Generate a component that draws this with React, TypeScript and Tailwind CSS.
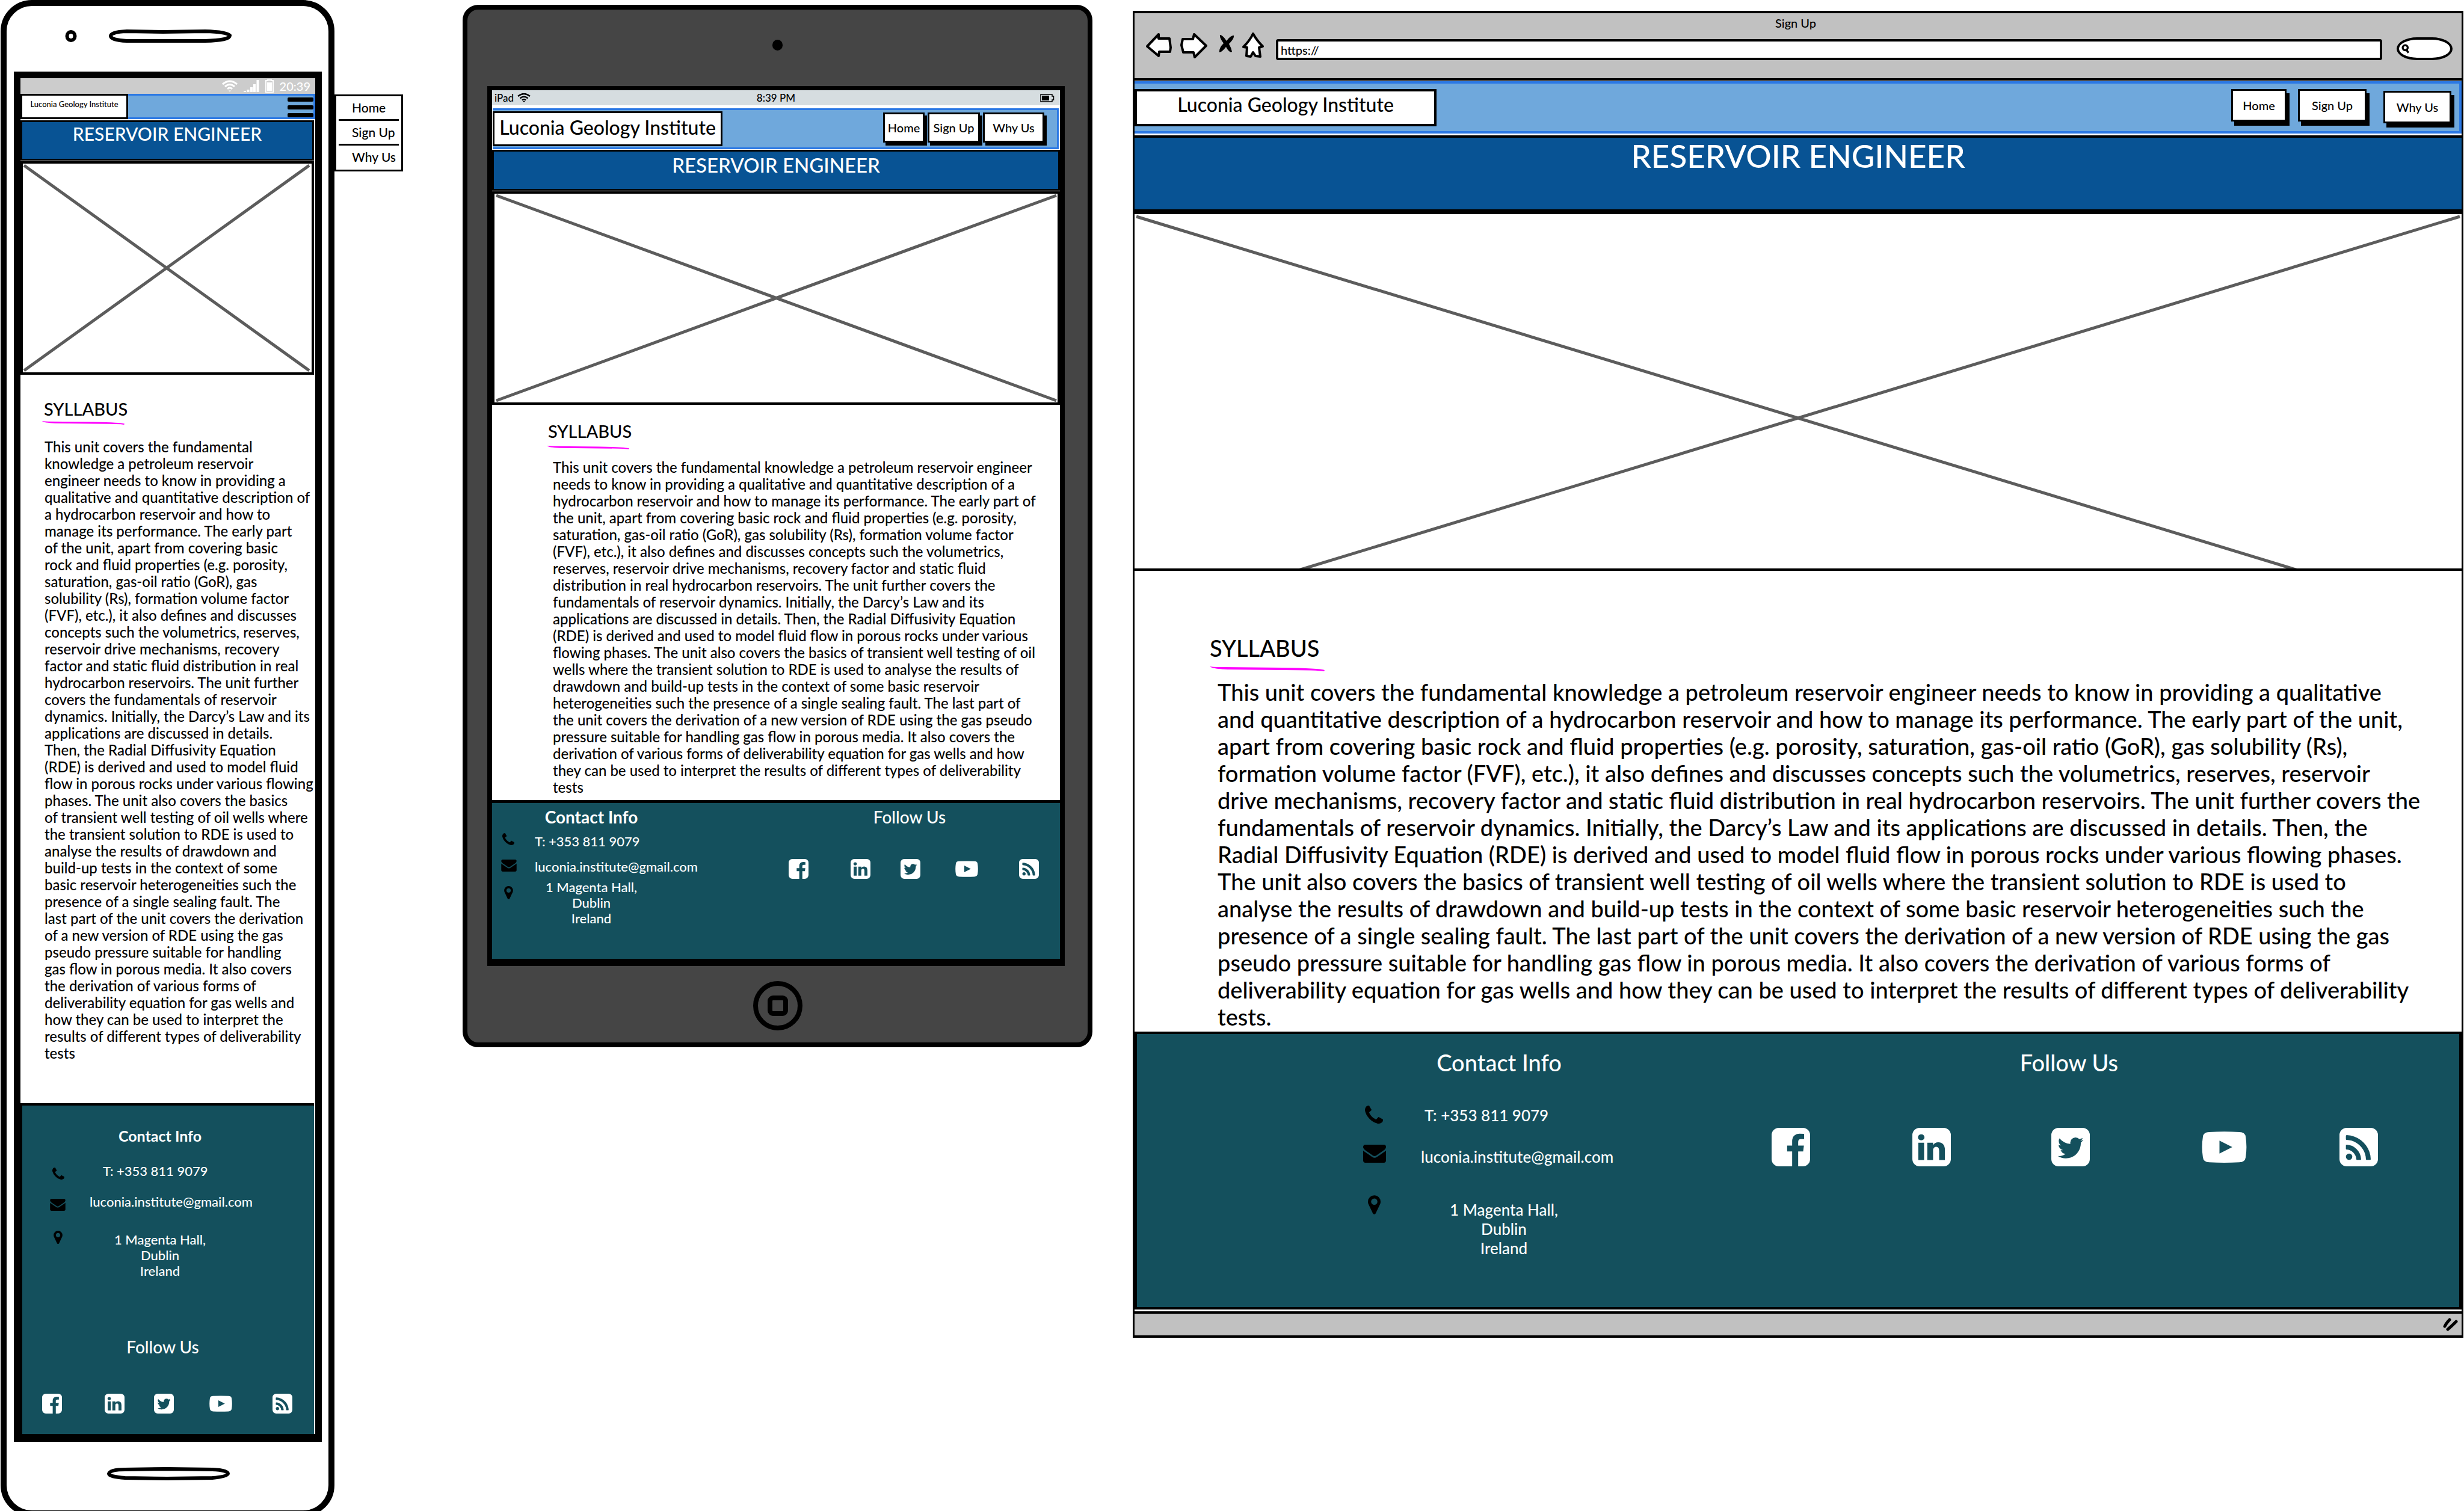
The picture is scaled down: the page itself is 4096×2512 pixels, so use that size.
import React from "react";

const LINES_PHONE = `This unit covers the fundamental
knowledge a petroleum reservoir
engineer needs to know in providing a
qualitative and quantitative description of
a hydrocarbon reservoir and how to
manage its performance. The early part
of the unit, apart from covering basic
rock and fluid properties (e.g. porosity,
saturation, gas-oil ratio (GoR), gas
solubility (Rs), formation volume factor
(FVF), etc.), it also defines and discusses
concepts such the volumetrics, reserves,
reservoir drive mechanisms, recovery
factor and static fluid distribution in real
hydrocarbon reservoirs. The unit further
covers the fundamentals of reservoir
dynamics. Initially, the Darcy’s Law and its
applications are discussed in details.
Then, the Radial Diffusivity Equation
(RDE) is derived and used to model fluid
flow in porous rocks under various flowing
phases. The unit also covers the basics
of transient well testing of oil wells where
the transient solution to RDE is used to
analyse the results of drawdown and
build-up tests in the context of some
basic reservoir heterogeneities such the
presence of a single sealing fault. The
last part of the unit covers the derivation
of a new version of RDE using the gas
pseudo pressure suitable for handling
gas flow in porous media. It also covers
the derivation of various forms of
deliverability equation for gas wells and
how they can be used to interpret the
results of different types of deliverability
tests`;

const LINES_TABLET = `This unit covers the fundamental knowledge a petroleum reservoir engineer
needs to know in providing a qualitative and quantitative description of a
hydrocarbon reservoir and how to manage its performance. The early part of
the unit, apart from covering basic rock and fluid properties (e.g. porosity,
saturation, gas-oil ratio (GoR), gas solubility (Rs), formation volume factor
(FVF), etc.), it also defines and discusses concepts such the volumetrics,
reserves, reservoir drive mechanisms, recovery factor and static fluid
distribution in real hydrocarbon reservoirs. The unit further covers the
fundamentals of reservoir dynamics. Initially, the Darcy’s Law and its
applications are discussed in details. Then, the Radial Diffusivity Equation
(RDE) is derived and used to model fluid flow in porous rocks under various
flowing phases. The unit also covers the basics of transient well testing of oil
wells where the transient solution to RDE is used to analyse the results of
drawdown and build-up tests in the context of some basic reservoir
heterogeneities such the presence of a single sealing fault. The last part of
the unit covers the derivation of a new version of RDE using the gas pseudo
pressure suitable for handling gas flow in porous media. It also covers the
derivation of various forms of deliverability equation for gas wells and how
they can be used to interpret the results of different types of deliverability
tests`;

const LINES_DESKTOP = `This unit covers the fundamental knowledge a petroleum reservoir engineer needs to know in providing a qualitative
and quantitative description of a hydrocarbon reservoir and how to manage its performance. The early part of the unit,
apart from covering basic rock and fluid properties (e.g. porosity, saturation, gas-oil ratio (GoR), gas solubility (Rs),
formation volume factor (FVF), etc.), it also defines and discusses concepts such the volumetrics, reserves, reservoir
drive mechanisms, recovery factor and static fluid distribution in real hydrocarbon reservoirs. The unit further covers the
fundamentals of reservoir dynamics. Initially, the Darcy’s Law and its applications are discussed in details. Then, the
Radial Diffusivity Equation (RDE) is derived and used to model fluid flow in porous rocks under various flowing phases.
The unit also covers the basics of transient well testing of oil wells where the transient solution to RDE is used to
analyse the results of drawdown and build-up tests in the context of some basic reservoir heterogeneities such the
presence of a single sealing fault. The last part of the unit covers the derivation of a new version of RDE using the gas
pseudo pressure suitable for handling gas flow in porous media. It also covers the derivation of various forms of
deliverability equation for gas wells and how they can be used to interpret the results of different types of deliverability
tests.`;

const SQUARE =
  "M1664 416v960q0 119-84.5 203.5t-203.5 84.5h-960q-119 0-203.5-84.5t-84.5-203.5v-960q0-119 84.5-203.5t203.5-84.5h960q119 0 203.5 84.5t84.5 203.5z";

const SOCIAL = [
  {
    name: "Facebook",
    box: "128 128 1536 1536",
    d: "M1376 128q119 0 203.5 84.5t84.5 203.5v960q0 119-84.5 203.5t-203.5 84.5h-188v-595h199l30-232h-229v-148q0-56 23.5-84t91.5-28l122-1v-207q-63-9-178-9-136 0-217.5 80t-81.5 226v171h-200v232h200v595h-532q-119 0-203.5-84.5t-84.5-203.5v-960q0-119 84.5-203.5t203.5-84.5h960z",
  },
  {
    name: "LinkedIn",
    box: "128 128 1536 1536",
    d:
      "M365 1414h231v-694h-231v694zm246-908q-1-52-36-86t-93-34-94.5 34-36.5 86q0 51 35.5 85.5t92.5 34.5h1q59 0 95-34.5t36-85.5zm585 908h231v-398q0-154-73-233t-193-79q-136 0-209 117h2v-101h-231q3 66 0 694h231v-388q0-38 7-56 15-35 45-59.5t74-24.5q116 0 116 157v371z" +
      SQUARE,
  },
  {
    name: "Twitter",
    box: "128 128 1536 1536",
    d:
      "M1408 610q-56 25-121 34 68-40 93-117-65 38-134 51-61-66-153-66-87 0-148.5 61.5t-61.5 148.5q0 29 5 48-129-7-242-65t-192-155q-29 50-29 106 0 114 91 175-47-1-100-26v2q0 75 50 133.5t123 72.5q-29 8-51 8-13 0-39-4 21 63 74.5 104t121.5 42q-116 90-261 90-26 0-50-3 148 94 322 94 112 0 210-35.5t168-95 120.5-137 75-162 24.5-168.5q0-18-1-27 63-45 105-109z" +
      SQUARE,
  },
  {
    name: "YouTube",
    box: "0 0 84 72",
    d: "M14 8Q42 6 70 8Q81 8 82 17Q85 36 82 55Q81 64 70 64.500Q42 66 14 64.500Q3 64 2 55Q-1 36 2 17Q3 8 14 8zM33 24L57 36L33 48z",
  },
  {
    name: "RSS",
    box: "128 128 1536 1536",
    d:
      "M640 1280q0-53-37.5-90.5t-90.5-37.5-90.5 37.5-37.5 90.5 37.5 90.5 90.5 37.5 90.5-37.5 37.5-90.5zm351 94q-13-232-177-396t-396-177q-14-1-24 9t-10 23v128q0 13 8.5 22t21.5 10q154 11 264 121t121 264q1 13 10 21.5t22 8.5h128q13 0 23-10t9-24zm384 1q-5-154-56-297.5t-139.5-260-205-205-260-139.5-297.5-56q-14-1-23 9-10 10-10 23v128q0 13 9 22t22 10q204 7 378 111.5t278.5 278.5 111.5 378q1 13 10 22t22 9h128q13 0 23-10 11-9 9-23z" +
      SQUARE,
  },
];

const PHONE_D =
  "M1408 1112q0 27-10 70.5t-21 68.5q-21 50-122 106-94 51-186 51-27 0-52.5-3.5t-57.5-12.5-47.5-14.5-55.5-20.5-49-18q-98-35-175-83-128-79-264.5-215.5t-215.5-264.5q-48-77-83-175-3-9-18-49t-20.5-55.5-14.5-47.5-12.5-57.5-3.5-52.5q0-92 51-186 56-101 106-122 25-11 68.5-21t70.5-10q14 0 21 3 18 6 53 76 11 19 30 54t35 63.5 31 53.5q3 4 17.5 25t21.5 35.5 7 28.5q0 20-28.5 50t-62 55-62 53-28.5 46q0 9 5 22.5t8.5 20.5 14 24 11.5 19q76 137 174 235t235 174q2 1 19 11.5t24 14 20.5 8.5 22.5 5q18 0 46-28.5t53-62 55-62 50-28.5q14 0 28.5 7t35.5 21.5 25 17.5q25 15 53.5 31t63.5 35 54 30q70 35 76 53 3 7 3 21z";
const MAIL_D =
  "M1792 710v794q0 66-47 113t-113 47h-1472q-66 0-113-47t-47-113v-794q44 49 101 87 362 246 497 345 57 42 92.5 65.5t94.5 48 110 24.5h2q51 0 110-24.5t94.5-48 92.5-65.5q170-123 498-345 57-39 100-87zm0-294q0 79-49 151t-122 123q-376 261-468 325-10 7-42.5 31t-54 38.5-52 32.5-57.5 27-50 9h-2q-23 0-50-9t-57.5-27-52-32.5-54-38.5-42.5-31q-91-64-262-182.5t-205-142.5q-62-42-117-115.5t-55-136.5q0-78 41.5-130t118.5-52h1472q65 0 112.5 47t47.5 113z";
const PIN_D =
  "M1152 640q0-106-75-181t-181-75-181 75-75 181 75 181 181 75 181-75 75-181zm256 0q0 109-33 179l-364 774q-16 33-47.5 52t-67.5 19-67.5-19-46.5-52l-365-774q-33-70-33-179 0-212 150-362t362-150 362 150 150 362z";

function Glyph({ box, d, className }: { box: string; d: string; className: string }) {
  return (
    <svg viewBox={box} className={className} fill="currentColor" fillRule="evenodd" aria-hidden="true">
      <path d={d} />
    </svg>
  );
}

function SocialLinks({ className, icon, wide }: { className: string; icon: string; wide: string }) {
  return (
    <nav aria-label="Follow us" className={`grid text-white ${className}`}>
      {SOCIAL.map((s) => (
        <a key={s.name} href="#" aria-label={s.name}>
          <Glyph box={s.box} d={s.d} className={s.name === "YouTube" ? wide : icon} />
        </a>
      ))}
    </nav>
  );
}

function Placeholder({ className, viewBox, lines }: { className: string; viewBox: string; lines: string }) {
  return (
    <div role="img" aria-label="Image placeholder" className={`border-black bg-white ${className}`}>
      <svg viewBox={viewBox} preserveAspectRatio="none" className="block size-full" fill="none" stroke="#5c5c5c">
        <path d={lines} strokeWidth="5" />
      </svg>
    </div>
  );
}

function Underline({ className }: { className: string }) {
  return (
    <svg viewBox="0 0 190 8" preserveAspectRatio="none" className={`block ${className}`} aria-hidden="true">
      <path d="M0 0Q6 1 14 1L120 2Q182 3 190 6L189 8Q180 6 120 6L30 5Q4 4 0 0z" fill="#ff00ff" />
    </svg>
  );
}

function NavButton({ children, className }: { children: string; className: string }) {
  return (
    <button
      type="button"
      className={`flex items-center justify-center border-[3px] border-black bg-white whitespace-nowrap text-[20px] leading-[24px] ${className}`}
    >
      {children}
    </button>
  );
}

function Slot({ d }: { d: string }) {
  return (
    <svg viewBox="0 0 204 22" className="block h-[22px] w-[204px]" fill="none" stroke="#000" strokeWidth="6" aria-hidden="true">
      <path d={d} />
    </svg>
  );
}

function Phone() {
  return (
    <section aria-label="Phone" className="flex flex-col rounded-[52px] border-[10px] border-black bg-white">
      <div className="flex h-[109px] items-center gap-[53px] pb-[9px] pl-[97px]">
        <svg viewBox="0 0 20 20" className="block size-[20px]" fill="none" stroke="#000" strokeWidth="6" aria-hidden="true">
          <ellipse cx="10" cy="10" rx="6.500" ry="7" />
        </svg>
        <Slot d="M30 3Q3 4 3 11Q4 18 30 19L160 19Q201 18 201 10Q196 4 160 3L90 4z" />
      </div>
      <div className="mr-[11px] ml-[12px] flex flex-col border-x-[11px] border-t-[11px] border-b-[13px] border-black">
        <div className="flex h-[26px] items-center justify-end gap-[10px] bg-[#cccccc] pr-[8px] text-[20px] leading-[26px] text-white">
          <svg viewBox="0 0 26 20" className="block h-[20px] w-[26px]" fill="none" stroke="currentColor" strokeWidth="3" aria-hidden="true">
            <path d="M1 7Q13 -3 25 7M5 11Q13 4 21 11M9 15Q13 11 17 15" />
            <path d="M11 17.500L15 17.500L13 19.500z" fill="currentColor" stroke="none" />
          </svg>
          <svg viewBox="0 0 26 20" className="block h-[20px] w-[26px]" fill="currentColor" aria-hidden="true">
            <path d="M0 18h4v2h-4zM5.500 16h4v4h-4zM11 12h4v8h-4zM16 7h4v13h-4zM21.500 0h4v20h-4z" />
          </svg>
          <svg viewBox="0 0 14 22" className="block h-[22px] w-[14px]" aria-hidden="true">
            <path d="M4 2V1H10V2H13V22H1V2z" fill="none" stroke="currentColor" strokeWidth="2" />
            <path d="M3 5h8v15h-8z" fill="currentColor" />
          </svg>
          <span>20:39</span>
        </div>
        <header className="flex h-[42px] border-y-[3px] border-r-[3px] border-[#2b78e4] bg-[#6fa8dc]">
          <a
            href="#"
            className="-my-[3px] flex w-[179px] items-center justify-center border-[3px] border-black bg-white pb-[6px] text-[13px] whitespace-nowrap"
          >
            Luconia Geology Institute
          </a>
          <button type="button" aria-label="Menu" className="ml-auto flex flex-col justify-between pt-[3px]">
            <span className="block h-[7px] w-[43px] rounded-[2px] bg-black" />
            <span className="block h-[7px] w-[43px] rounded-[2px] bg-black" />
            <span className="block h-[7px] w-[43px] rounded-[2px] bg-black" />
          </button>
        </header>
        <h1 className="mt-[2px] mr-[2px] h-[67px] border-[3px] border-black bg-[#085394] pt-px text-center text-[30px] leading-[36px] text-white">
          RESERVOIR ENGINEER
        </h1>
        <Placeholder className="mt-px mr-[2px] h-[355px] border-[4px]" viewBox="0 0 482 347" lines="M2 3L478 344M478 3L2 344" />
        <h2 className="mt-[39px] ml-[39px] text-[29px] leading-[36px]">SYLLABUS</h2>
        <Underline className="mt-[2px] ml-[36px] h-[6px] w-[137px]" />
        <p className="mt-[23px] ml-[40px] text-[24px] leading-[28px] whitespace-pre">{LINES_PHONE}</p>
        <footer className="mt-[69px] mr-[2px] flex flex-col border-t-[4px] border-l-[3px] border-black bg-[#14505d] pb-[34px] text-white">
          <div className="grid grid-cols-[66px_1fr] pt-[36px] pl-[46px] text-[22px] leading-[26px]">
            <h3 className="col-start-2 w-[234px] text-center text-[25px] leading-[28px] font-bold">Contact Info</h3>
            <Glyph box="0 0 1408 1408" d={PHONE_D} className="mt-[39px] ml-[4px] size-[20px] text-black" />
            <a href="tel:+3538119079" className="mt-[32px] pl-[22px]">T: +353 811 9079</a>
            <Glyph box="0 256 1792 1408" d={MAIL_D} className="mt-[32px] h-[20px] w-[26px] text-black" />
            <a href="mailto:luconia.institute@gmail.com" className="mt-[24px]">luconia.institute@gmail.com</a>
            <Glyph box="384 128 1024 1536" d={PIN_D} className="mt-[33px] ml-[6px] h-[22px] w-[15px] text-black" />
            <address className="mt-[35px] w-[234px] text-center not-italic">
              1 Magenta Hall,
              <br />
              Dublin
              <br />
              Ireland
            </address>
          </div>
          <h3 className="mt-[95px] pr-[18px] text-center text-[28px] leading-[36px]">Follow Us</h3>
          <SocialLinks
            className="mt-[60px] mr-[36px] ml-[33px] grid-cols-[104fr_82fr_92fr_105fr_33px]"
            icon="block size-[33px]"
            wide="block h-[33px] w-[38px]"
          />
        </footer>
      </div>
      <div className="flex h-[114px] items-center pb-[8px] pl-[167px]">
        <Slot d="M30 4L100 3L175 4Q201 5 201 11Q199 16 175 18L100 19L30 18Q3 16 3 11Q5 4 30 4z" />
      </div>
    </section>
  );
}

function Dropdown() {
  return (
    <nav aria-label="Menu" className="mt-[157px] flex h-[128px] w-[114px] flex-col border-[3px] border-black bg-white px-[4px] text-[21px] leading-[24px]">
      <a href="#" className="flex h-[41px] items-center border-b-[3px] border-black pl-[22px]">Home</a>
      <a href="#" className="flex h-[41px] items-center border-b-[3px] border-black pl-[22px] whitespace-nowrap">Sign Up</a>
      <a href="#" className="flex h-[38px] items-center pl-[22px] whitespace-nowrap">Why Us</a>
    </nav>
  );
}

function Tablet() {
  return (
    <section aria-label="Tablet" className="mt-[8px] flex flex-col self-start rounded-[26px] border-[8px] border-black bg-[#454545]">
      <div className="flex h-[127px] justify-center pt-[50px]">
        <span className="block h-[18px] w-[17px] rounded-full bg-black" />
      </div>
      <div className="mr-[38px] ml-[33px] flex flex-col border-x-[8px] border-t-[7px] border-b-[12px] border-black bg-white">
        <div className="grid h-[25px] grid-cols-3 items-center bg-[#d6dde0] px-[4px] text-[17px] leading-[24px]">
          <span className="flex items-center gap-[6px]">
            iPad
            <svg viewBox="0 0 22 15" className="block h-[15px] w-[22px]" fill="none" stroke="#000" strokeWidth="2.500" aria-hidden="true">
              <path d="M1 5Q11 -3 21 5M4.500 8.500Q11 3 17.500 8.500M8 11.500Q11 9 14 11.500" />
              <path d="M9 13L13 13L11 15z" fill="#000" stroke="none" />
            </svg>
          </span>
          <span className="text-center">8:39 PM</span>
          <svg viewBox="0 0 24 14" className="mr-[5px] block h-[14px] w-[24px] justify-self-end" aria-hidden="true">
            <path d="M1 1H20V4H22.500V10H20V13H1z" fill="none" stroke="#000" strokeWidth="1.500" />
            <path d="M3 3h12v8h-12z" />
          </svg>
        </div>
        <header className="mt-[5px] mr-[2px] ml-px flex h-[68px] items-center border-y-[3px] border-r-[3px] border-[#2b78e4] bg-[#6fa8dc]">
          <a
            href="#"
            className="flex h-[58px] w-[382px] items-center justify-center border-[3px] border-black bg-white pb-[4px] text-[32px] whitespace-nowrap"
          >
            Luconia Geology Institute
          </a>
          <nav aria-label="Main" className="mr-[21px] mb-[4px] ml-auto flex gap-[5px]">
            <NavButton className="h-[50px] w-[69px] shadow-[4px_5px_0_#000]">Home</NavButton>
            <NavButton className="h-[50px] w-[87px] shadow-[4px_5px_0_#000]">Sign Up</NavButton>
            <NavButton className="h-[50px] w-[102px] shadow-[4px_5px_0_#000]">Why Us</NavButton>
          </nav>
        </header>
        <h1 className="mt-px h-[68px] border-[3px] border-black bg-[#085394] pt-[2px] text-center text-[33px] leading-[40px] text-white">
          RESERVOIR ENGINEER
        </h1>
        <Placeholder className="mt-px h-[355px] border-[4px]" viewBox="0 0 936 347" lines="M3 3L934 344M934 3L3 344" />
        <h2 className="mt-[26px] ml-[93px] text-[29px] leading-[36px]">SYLLABUS</h2>
        <Underline className="mt-[6px] ml-[91px] h-[6px] w-[137px]" />
        <p className="mt-[16px] ml-[101px] text-[24px] leading-[28px] whitespace-pre">{LINES_TABLET}</p>
        <footer className="mt-[7px] grid grid-cols-[444fr_500fr] border-t-[5px] border-black bg-[#14505d] pb-[54px] text-white">
          <div className="grid grid-cols-[56px_1fr] pt-[7px] pl-[15px] text-[22px] leading-[26px]">
            <h3 className="col-start-2 w-[188px] text-center text-[28px] leading-[32px] font-bold">Contact Info</h3>
            <Glyph box="0 0 1408 1408" d={PHONE_D} className="mt-[11px] ml-[2px] size-[20px] text-black" />
            <a href="tel:+3538119079" className="mt-[12px]">T: +353 811 9079</a>
            <Glyph box="0 256 1792 1408" d={MAIL_D} className="mt-[17px] h-[20px] w-[26px] text-black" />
            <a href="mailto:luconia.institute@gmail.com" className="mt-[16px]">luconia.institute@gmail.com</a>
            <Glyph box="384 128 1024 1536" d={PIN_D} className="mt-[19px] ml-[5px] h-[22px] w-[15px] text-black" />
            <address className="mt-[8px] w-[188px] text-center not-italic">
              1 Magenta Hall,
              <br />
              Dublin
              <br />
              Ireland
            </address>
          </div>
          <div className="pt-[7px]">
            <h3 className="text-center text-[28px] leading-[32px]">Follow Us</h3>
            <SocialLinks
              className="mt-[54px] mr-[35px] ml-[49px] grid-cols-[103fr_83fr_91fr_106fr_33px]"
              icon="block size-[33px]"
              wide="block h-[33px] w-[38px]"
            />
          </div>
        </footer>
      </div>
      <div className="flex h-[127px] items-center justify-center pt-[5px]">
        <button type="button" aria-label="Home" className="flex size-[82px] items-center justify-center rounded-full border-[8px] border-black">
          <span className="block size-[34px] rounded-[9px] border-[8px] border-black" />
        </button>
      </div>
    </section>
  );
}

function Desktop() {
  return (
    <section aria-label="Browser" className="mt-[18px] flex flex-col self-start border-x-[3px] border-y-[4px] border-black bg-white">
      <div className="flex h-[112px] flex-col border-b-[4px] border-black bg-[#c1c1c1]">
        <div className="pt-[4px] pr-[8px] text-center text-[20px] leading-[24px]">Sign Up</div>
        <div className="flex items-start pt-[3px] pr-[15px] pl-[19px]">
          <button type="button" aria-label="Back" className="mt-[2px]">
            <svg viewBox="0 0 43 42" className="block h-[42px] w-[43px]" fill="#fff" stroke="#000" strokeWidth="4" strokeLinejoin="round">
              <path d="M21 2L2 22L21 38L22 31H40L41 24L39 9H21z" />
            </svg>
          </button>
          <button type="button" aria-label="Forward" className="mt-[2px] ml-[14px]">
            <svg viewBox="0 0 45 42" className="block h-[42px] w-[45px]" fill="#fff" stroke="#000" strokeWidth="4" strokeLinejoin="round">
              <path d="M23 2L43 21L24 40L22 32H5L2 20L4 10H21z" />
            </svg>
          </button>
          <button type="button" aria-label="Stop" className="mt-[5px] ml-[19px]">
            <svg viewBox="0 0 26 30" className="block h-[30px] w-[26px]">
              <path d="M2 0Q6 0 13 10Q19 1 25 1Q26 6 17 15Q21 22 22 28Q18 31 12 20Q6 28 1 29Q0 22 8 14Q1 5 2 0z" />
            </svg>
          </button>
          <button type="button" aria-label="Home page" className="ml-[13px]">
            <svg viewBox="0 0 36 43" className="block h-[43px] w-[36px]" fill="#fff" stroke="#000" strokeWidth="4" strokeLinejoin="round">
              <path d="M18 3Q24 14 34 24L28 26L30 41L22 40L18 34L14 41L7 40L8 26L2 25Q13 14 18 3z" />
            </svg>
          </button>
          <input
            type="text"
            aria-label="Address"
            defaultValue="https://"
            className="mt-[12px] ml-[20px] h-[35px] min-w-0 flex-1 rounded-[4px] border-[4px] border-black bg-white px-[4px] text-[20px] leading-[24px]"
          />
          <label className="mt-[9px] ml-[24px] flex h-[38px] w-[93px] items-center rounded-[34px/19px] border-[4px] border-black bg-white pl-[4px]">
            <svg viewBox="0 0 16 18" className="block h-[18px] w-[16px]" fill="none" stroke="#000" strokeWidth="4" aria-hidden="true">
              <circle cx="7.500" cy="7" r="5" />
              <path d="M9 10L14 17" />
            </svg>
            <input type="search" aria-label="Search" className="w-full min-w-0 bg-transparent outline-none" />
          </label>
        </div>
      </div>
      <header className="mt-px flex h-[87px] items-center border-y-[4px] border-r-[4px] border-[#2b78e4] bg-[#6fa8dc]">
        <a
          href="#"
          className="flex h-[62px] w-[502px] items-center justify-center border-[4px] border-black bg-white pb-[10px] text-[32px] whitespace-nowrap"
        >
          Luconia Geology Institute
        </a>
        <nav aria-label="Main" className="mr-[13px] mb-[4px] ml-auto flex items-start">
          <NavButton className="h-[54px] w-[92px] shadow-[5px_7px_0_#000]">Home</NavButton>
          <NavButton className="ml-[19px] h-[54px] w-[114px] shadow-[5px_7px_0_#000]">Sign Up</NavButton>
          <NavButton className="mt-[3px] ml-[28px] h-[54px] w-[113px] shadow-[5px_7px_0_#000]">Why Us</NavButton>
        </nav>
      </header>
      <h1 className="mt-[3px] h-[127px] border-y-[4px] border-black bg-[#085394] text-center text-[53px] leading-[60px] text-white">
        RESERVOIR ENGINEER
      </h1>
      <Placeholder className="h-[597px] border-y-[4px]" viewBox="0 0 2206 589" lines="M3 4L1937 593M2203 4L269 593" />
      <h2 className="mt-[105px] ml-[125px] text-[38px] leading-[46px]">SYLLABUS</h2>
      <Underline className="mt-[8px] ml-[125px] h-[8px] w-[191px]" />
      <p className="mt-[12px] ml-[138px] text-[38px] leading-[45px] whitespace-pre">{LINES_DESKTOP}</p>
      <footer className="mt-[2px] grid grid-cols-[914fr_1292fr] border-x-[4px] border-y-[4px] border-black bg-[#14505d] pb-[82px] text-white">
        <div className="grid grid-cols-[96px_1fr] pt-[24px] pl-[376px] text-[26px] leading-[32px]">
          <h3 className="col-start-2 w-[260px] text-center text-[38px] leading-[46px]">Contact Info</h3>
          <Glyph box="0 0 1408 1408" d={PHONE_D} className="mt-[49px] ml-[3px] size-[30px] text-black" />
          <a href="tel:+3538119079" className="mt-[49px] pl-[6px]">T: +353 811 9079</a>
          <Glyph box="0 256 1792 1408" d={MAIL_D} className="mt-[33px] h-[30px] w-[38px] text-black" />
          <a href="mailto:luconia.institute@gmail.com" className="mt-[37px]">luconia.institute@gmail.com</a>
          <Glyph box="384 128 1024 1536" d={PIN_D} className="mt-[48px] ml-[8px] h-[32px] w-[21px] text-black" />
          <address className="mt-[56px] w-[276px] text-center not-italic">
            1 Magenta Hall,
            <br />
            Dublin
            <br />
            Ireland
          </address>
        </div>
        <div className="pt-[24px]">
          <h3 className="pr-[10px] text-center text-[38px] leading-[46px]">Follow Us</h3>
          <SocialLinks
            className="mt-[86px] mr-[135px] ml-[144px] grid-cols-[234fr_231fr_249fr_229fr_64px]"
            icon="block size-[64px]"
            wide="block h-[64px] w-[75px]"
          />
        </div>
      </footer>
      <div className="mt-[3px] flex h-[40px] items-center justify-end border-t-[4px] border-black bg-[#c1c1c1] pr-[5px]">
        <svg viewBox="0 0 26 22" className="block h-[22px] w-[26px]" fill="none" stroke="#000" strokeWidth="5" strokeLinecap="round" aria-hidden="true">
          <path d="M3 14Q6 8 11 3M8 19Q14 14 22 6" />
        </svg>
      </div>
    </section>
  );
}

export default function App() {
  return (
    <main className="grid grid-cols-[555fr_213fr_1047fr_67fr_2213fr] bg-white pl-px font-['Lato',sans-serif] font-medium text-black">
      <Phone />
      <Dropdown />
      <Tablet />
      <div className="col-start-5 flex flex-col">
        <Desktop />
      </div>
    </main>
  );
}
